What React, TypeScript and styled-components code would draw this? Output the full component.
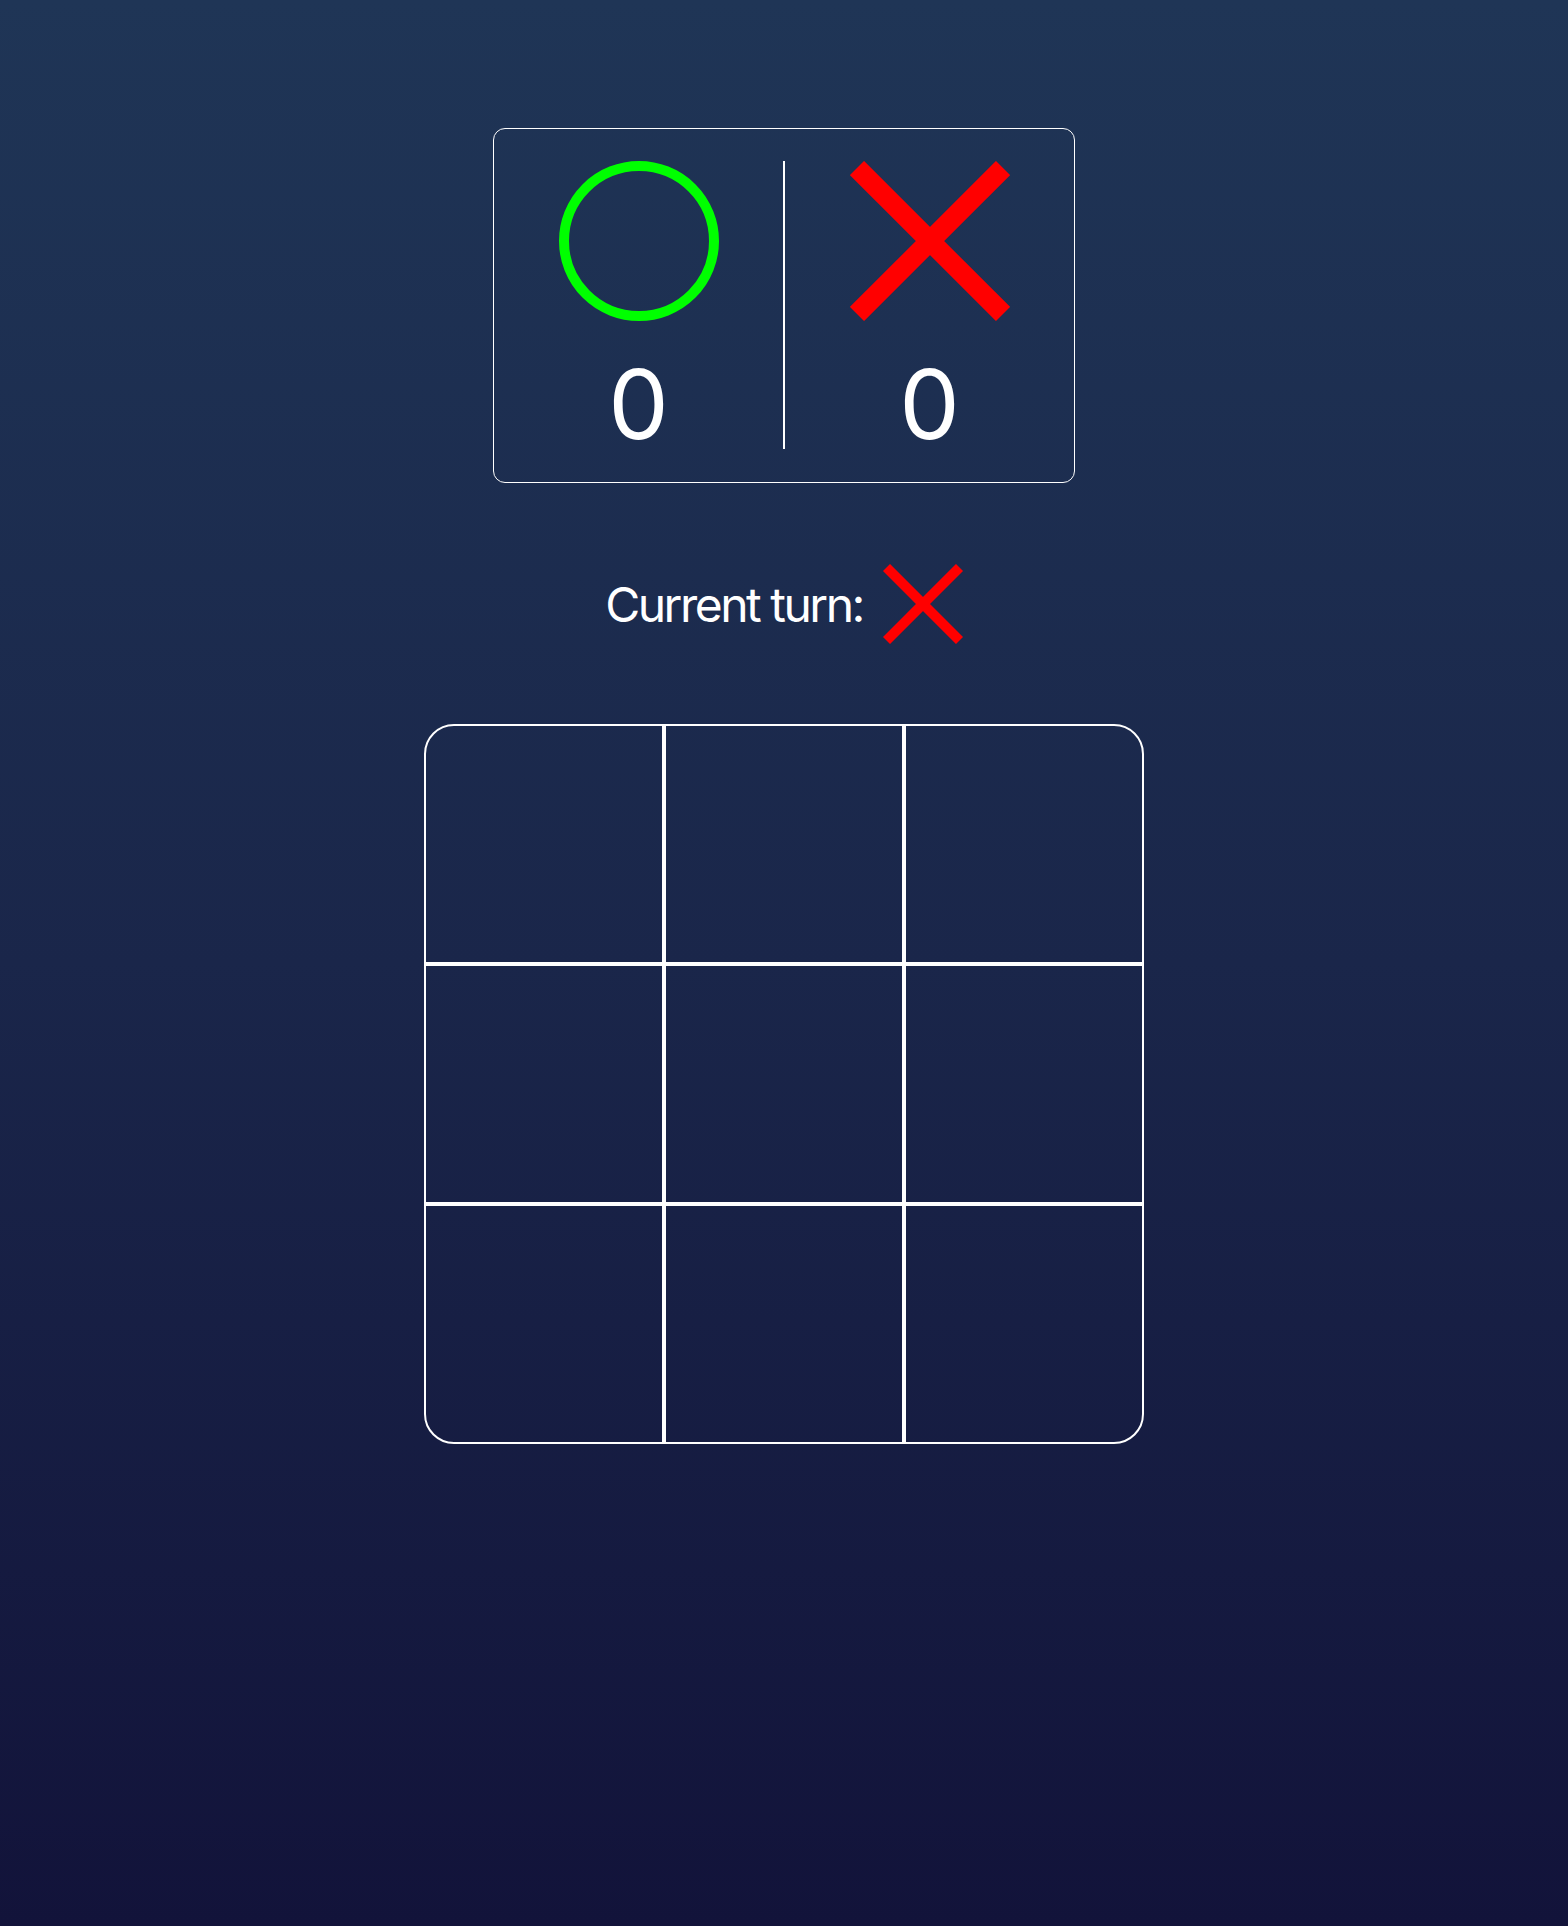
import React from "react";
import styled, { createGlobalStyle } from "styled-components";

const GlobalStyle = createGlobalStyle`
    html, body {
        margin: 0;
        padding: 0;
    }
    body {
        font-family: Inter, "Noto Sans", sans-serif;
        color: #FFFFFF;
    }
`;

const Page = styled.div`
    min-height: 1926px;
    box-sizing: border-box;
    padding-top: 128px;
    display: flex;
    flex-direction: column;
    align-items: center;
    background: linear-gradient(180deg, #1f3556 0%, #1a264a 50%, #12133a 100%);
`;

const ScoreBoard = styled.div`
    width: 582px;
    box-sizing: border-box;
    display: flex;
    padding: 32px 0 30px;
    border: 1.5px solid #FFFFFF;
    border-radius: 12px;
`;

const ScoreColumn = styled.div`
    flex: 1;
    display: flex;
    flex-direction: column;
    align-items: center;
    gap: 35px;
`;

const Divider = styled.div`
    width: 2px;
    align-self: stretch;
    margin-bottom: 3px;
    background: #FFFFFF;
`;

const Score = styled.span`
    font-size: 96px;
    line-height: 1;
    font-weight: 400;
`;

const TurnRow = styled.div`
    margin-top: 81px;
    display: flex;
    align-items: center;
    gap: 20px;
    height: 80px;
`;

const TurnLabel = styled.span`
    font-size: 48px;
    letter-spacing: -2.5px;
`;

const Board = styled.div`
    margin-top: 80px;
    width: 720px;
    height: 720px;
    display: grid;
    grid-template-columns: repeat(3, 1fr);
    grid-template-rows: repeat(3, 1fr);

    & > :nth-child(1) { border-top-left-radius: 30px; }
    & > :nth-child(3) { border-top-right-radius: 30px; }
    & > :nth-child(7) { border-bottom-left-radius: 30px; }
    & > :nth-child(9) { border-bottom-right-radius: 30px; }
`;

const Cell = styled.button`
    box-sizing: border-box;
    border: 2px solid #FFFFFF;
    background: transparent;
    padding: 0;
    margin: 0;
    cursor: pointer;
`;

const OMark = ({ size }: { size: number }) => (
    <svg width={size} height={size} viewBox="0 0 160 160">
        <circle cx="80" cy="80" r="75" fill="none" stroke="#00FF00" strokeWidth="10" />
    </svg>
);

const XMark = ({ size }: { size: number }) => (
    <svg width={size} height={size} viewBox="0 0 160 160">
        <g stroke="#FF0000" strokeWidth="20" strokeLinecap="butt">
            <line x1="7" y1="7" x2="153" y2="153" />
            <line x1="153" y1="7" x2="7" y2="153" />
        </g>
    </svg>
);

export default function App() {
    const scores = { o: 0, x: 0 };
    const cells = Array(9).fill(null);

    return (
        <Page>
            <GlobalStyle />
            <ScoreBoard>
                <ScoreColumn>
                    <OMark size={160} />
                    <Score>{scores.o}</Score>
                </ScoreColumn>
                <Divider />
                <ScoreColumn>
                    <XMark size={160} />
                    <Score>{scores.x}</Score>
                </ScoreColumn>
            </ScoreBoard>

            <TurnRow>
                <TurnLabel>Current turn:</TurnLabel>
                <XMark size={80} />
            </TurnRow>

            <Board>
                {cells.map((_, i) => (
                    <Cell key={i} aria-label={`cell ${i + 1}`} />
                ))}
            </Board>
        </Page>
    );
}
